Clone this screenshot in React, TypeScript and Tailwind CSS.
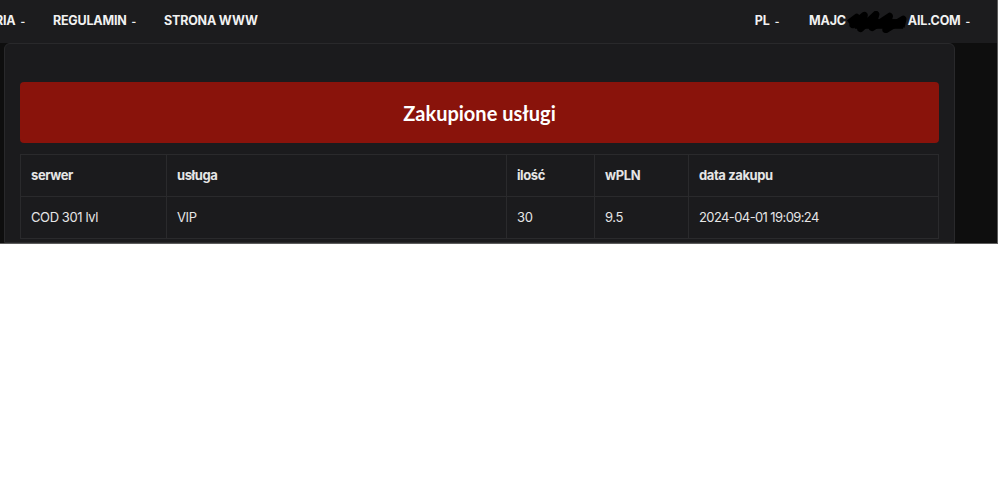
import { ReactNode } from 'react';

function NavItem({ children, caret = true }: { children: ReactNode; caret?: boolean }) {
  return (
    <span className="flex items-center gap-[5px] text-[12.5px] font-bold uppercase tracking-[-0.2px] text-[#f1f1f1]">
      {children}
      {caret && <span className="text-[10px] font-bold">-</span>}
    </span>
  );
}

const rows = [{ serwer: 'COD 301 lvl', usluga: 'VIP', ilosc: '30', pln: '9.5', data: '2024-04-01 19:09:24' }];

export default function App() {
  return (
    <div className="w-[1000px] h-[494px] bg-white" style={{ fontFamily: 'Inter, "Noto Sans", sans-serif' }}>
      <div className="w-[998px] h-[244px] overflow-hidden bg-[#0e0e0e] border-r border-b border-[#5c5c5c] flex flex-col">
        {/* nawigacja */}
        <div className="h-[43px] shrink-0 bg-[#1c1c1e] flex items-center justify-between pr-[27px]">
          <div className="flex items-center gap-[28px] ml-[-5px]">
            <NavItem>ria</NavItem>
            <NavItem>Regulamin</NavItem>
            <NavItem caret={false}>Strona www</NavItem>
          </div>
          <div className="flex items-center gap-[30px]">
            <NavItem>PL</NavItem>
            <NavItem>
              <span className="flex items-center">
                MAJC
                <svg width="60" height="22" viewBox="0 0 62 22" className="mx-[1px]">
                  <path d="M2 12 L10 6 L6 14 L18 4 L14 18 L30 3 L26 17 L44 5 L40 19 L58 8 L56 16" stroke="#000" strokeWidth="7" fill="none" strokeLinejoin="round" />
                  <rect x="8" y="8" width="50" height="10" fill="#000" />
                </svg>
                AIL.COM
              </span>
            </NavItem>
          </div>
        </div>

        {/* karta */}
        <div className="ml-[4px] w-[951px] flex-1 bg-[#1b1b1d] border border-[#29292b] rounded-t-[6px] px-[15px] pt-[38px]">
          <div className="h-[61px] bg-[#89130b] rounded-[4px] flex items-center justify-center">
            <h1 className="text-[20px] font-bold text-white" style={{ fontFamily: 'Lato, "Open Sans", sans-serif' }}>
              Zakupione usługi
            </h1>
          </div>

          <table className="mt-[11px] w-[919px] border-collapse text-[13px] text-[#e6e6e6] tracking-[-0.4px]">
            <thead>
              <tr className="h-[42px] text-left">
                <th className="w-[146px] border border-[#2a2a2c] px-[10px] font-bold">serwer</th>
                <th className="w-[340px] border border-[#2a2a2c] px-[10px] font-bold">usługa</th>
                <th className="w-[88px] border border-[#2a2a2c] px-[10px] font-bold">ilość</th>
                <th className="w-[94px] border border-[#2a2a2c] px-[10px] font-bold">wPLN</th>
                <th className="border border-[#2a2a2c] px-[10px] font-bold">data zakupu</th>
              </tr>
            </thead>
            <tbody>
              {rows.map((r, i) => (
                <tr key={i} className="h-[42px]">
                  <td className="border border-[#2a2a2c] px-[10px]">{r.serwer}</td>
                  <td className="border border-[#2a2a2c] px-[10px]">{r.usluga}</td>
                  <td className="border border-[#2a2a2c] px-[10px]">{r.ilosc}</td>
                  <td className="border border-[#2a2a2c] px-[10px]">{r.pln}</td>
                  <td className="border border-[#2a2a2c] px-[10px] tracking-[-0.6px]">{r.data}</td>
                </tr>
              ))}
            </tbody>
          </table>
        </div>
      </div>
    </div>
  );
}
